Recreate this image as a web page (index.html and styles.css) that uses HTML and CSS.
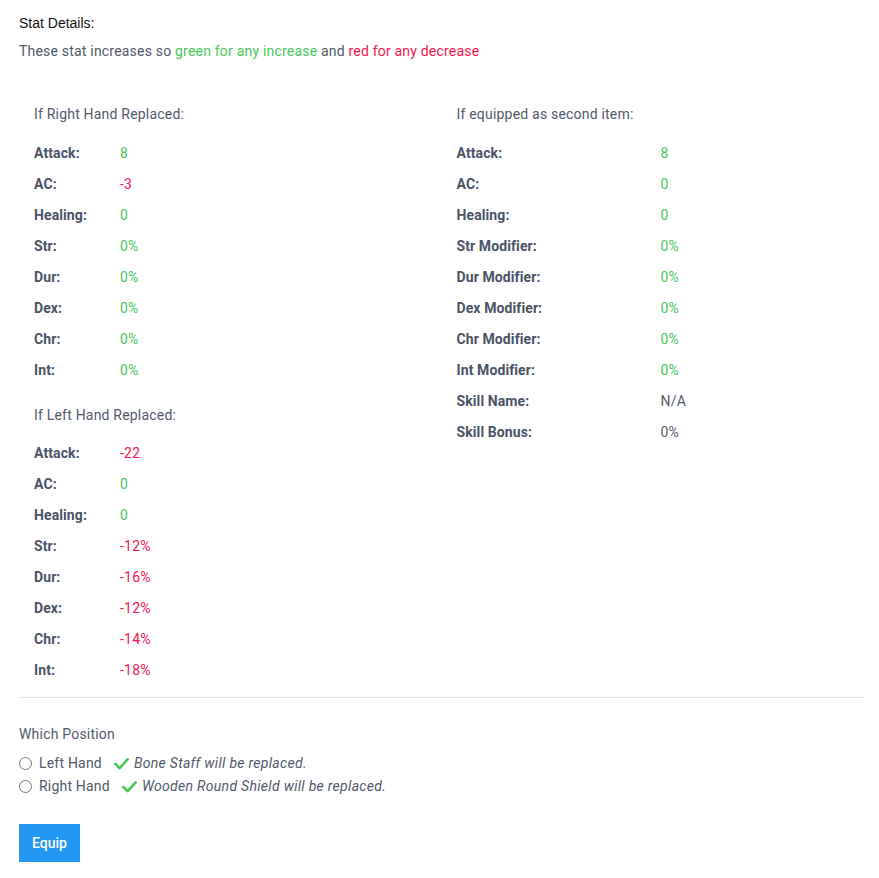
FILE: index.html
```html
<!DOCTYPE html>
<html>
<head>
<meta charset="utf-8">
<link rel="stylesheet" href="styles.css">
</head>
<body>
<div class="page">
  <div class="title">Stat Details:</div>
  <p class="subtitle">These stat increases so <span class="pos">green for any increase</span> and <span class="neg">red for any decrease</span></p>

  <div class="columns">
    <div class="col">
      <div class="heading">If Right Hand Replaced:</div>
      <dl class="stats stats-left">
        <div class="row"><dt>Attack:</dt><dd class="pos">8</dd></div>
        <div class="row"><dt>AC:</dt><dd class="neg">-3</dd></div>
        <div class="row"><dt>Healing:</dt><dd class="pos">0</dd></div>
        <div class="row"><dt>Str:</dt><dd class="pos">0%</dd></div>
        <div class="row"><dt>Dur:</dt><dd class="pos">0%</dd></div>
        <div class="row"><dt>Dex:</dt><dd class="pos">0%</dd></div>
        <div class="row"><dt>Chr:</dt><dd class="pos">0%</dd></div>
        <div class="row"><dt>Int:</dt><dd class="pos">0%</dd></div>
      </dl>
      <div class="heading heading-second">If Left Hand Replaced:</div>
      <dl class="stats stats-left">
        <div class="row"><dt>Attack:</dt><dd class="neg">-22</dd></div>
        <div class="row"><dt>AC:</dt><dd class="pos">0</dd></div>
        <div class="row"><dt>Healing:</dt><dd class="pos">0</dd></div>
        <div class="row"><dt>Str:</dt><dd class="neg">-12%</dd></div>
        <div class="row"><dt>Dur:</dt><dd class="neg">-16%</dd></div>
        <div class="row"><dt>Dex:</dt><dd class="neg">-12%</dd></div>
        <div class="row"><dt>Chr:</dt><dd class="neg">-14%</dd></div>
        <div class="row"><dt>Int:</dt><dd class="neg">-18%</dd></div>
      </dl>
    </div>
    <div class="col">
      <div class="heading">If equipped as second item:</div>
      <dl class="stats stats-right">
        <div class="row"><dt>Attack:</dt><dd class="pos">8</dd></div>
        <div class="row"><dt>AC:</dt><dd class="pos">0</dd></div>
        <div class="row"><dt>Healing:</dt><dd class="pos">0</dd></div>
        <div class="row"><dt>Str Modifier:</dt><dd class="pos">0%</dd></div>
        <div class="row"><dt>Dur Modifier:</dt><dd class="pos">0%</dd></div>
        <div class="row"><dt>Dex Modifier:</dt><dd class="pos">0%</dd></div>
        <div class="row"><dt>Chr Modifier:</dt><dd class="pos">0%</dd></div>
        <div class="row"><dt>Int Modifier:</dt><dd class="pos">0%</dd></div>
        <div class="row"><dt>Skill Name:</dt><dd>N/A</dd></div>
        <div class="row"><dt>Skill Bonus:</dt><dd>0%</dd></div>
      </dl>
    </div>
  </div>

  <hr class="divider">

  <div class="position-label">Which Position</div>
  <div class="options">
    <label class="option">
      <span class="radio"></span>
      <span class="option-name">Left Hand</span>
      <svg class="check" viewBox="0 0 16 16" width="15" height="15"><path d="M1.5 8.5 L6 13 L14.5 3.5" fill="none" stroke="#48c75a" stroke-width="2.8" stroke-linecap="round" stroke-linejoin="round"/></svg>
      <em class="note">Bone Staff will be replaced.</em>
    </label>
    <label class="option">
      <span class="radio"></span>
      <span class="option-name">Right Hand</span>
      <svg class="check" viewBox="0 0 16 16" width="15" height="15"><path d="M1.5 8.5 L6 13 L14.5 3.5" fill="none" stroke="#48c75a" stroke-width="2.8" stroke-linecap="round" stroke-linejoin="round"/></svg>
      <em class="note">Wooden Round Shield will be replaced.</em>
    </label>
  </div>

  <button class="equip">Equip</button>
</div>
</body>
</html>
```

FILE: styles.css
```css
* { box-sizing: border-box; }
html, body { margin: 0; padding: 0; background: #fff; }
body {
  font-family: Roboto, "Noto Sans", sans-serif;
  font-size: 14px;
  letter-spacing: 0.2px;
  color: #525a6b;
}
.page {
  width: 864px;
  padding: 13px 0 0 19px;
}
.title {
  font-family: "Liberation Sans", Arial, sans-serif;
  font-size: 14px;
  letter-spacing: 0;
  line-height: 20px;
  color: #111;
}
.subtitle {
  margin: 8px 0 0;
  line-height: 20px;
}
.pos { color: #48c75a; }
.neg { color: #f3164f; }
.columns {
  display: grid;
  grid-template-columns: 1fr 1fr;
  margin-top: 43px;
}
.col { padding: 0 15px; }
.heading { line-height: 20px; }
.heading-second { margin-top: 19px; }
.stats { margin: 13.5px 0 0; }
.row { display: flex; line-height: 31px; }
.row dt { font-weight: 700; color: #4a5366; letter-spacing: 0.1px; }
.row dd { margin: 0; }
.stats-left dt { width: 86px; }
.stats-right dt { width: 204px; }
.divider {
  margin: 11px 0 0;
  border: 0;
  border-top: 1px solid #e3e3e3;
  width: 845px;
}
.position-label {
  margin-top: 26px;
  line-height: 20px;
}
.options { margin-top: 7.5px; }
.option {
  display: flex;
  align-items: center;
  line-height: 23px;
}
.radio {
  width: 13px;
  height: 13px;
  border: 1px solid #767676;
  border-radius: 50%;
  margin-right: 7px;
}
.option-name { margin-right: 12px; }
.check { margin-right: 5px; }
.note { font-style: italic; letter-spacing: 0.3px; }
.equip {
  margin-top: 26.5px;
  width: 61px;
  height: 38px;
  border: 0;
  background: #2196f3;
  color: #fff;
  font-family: Roboto, sans-serif;
  font-size: 14px;
  font-weight: 500;
  padding: 0;
}
```
